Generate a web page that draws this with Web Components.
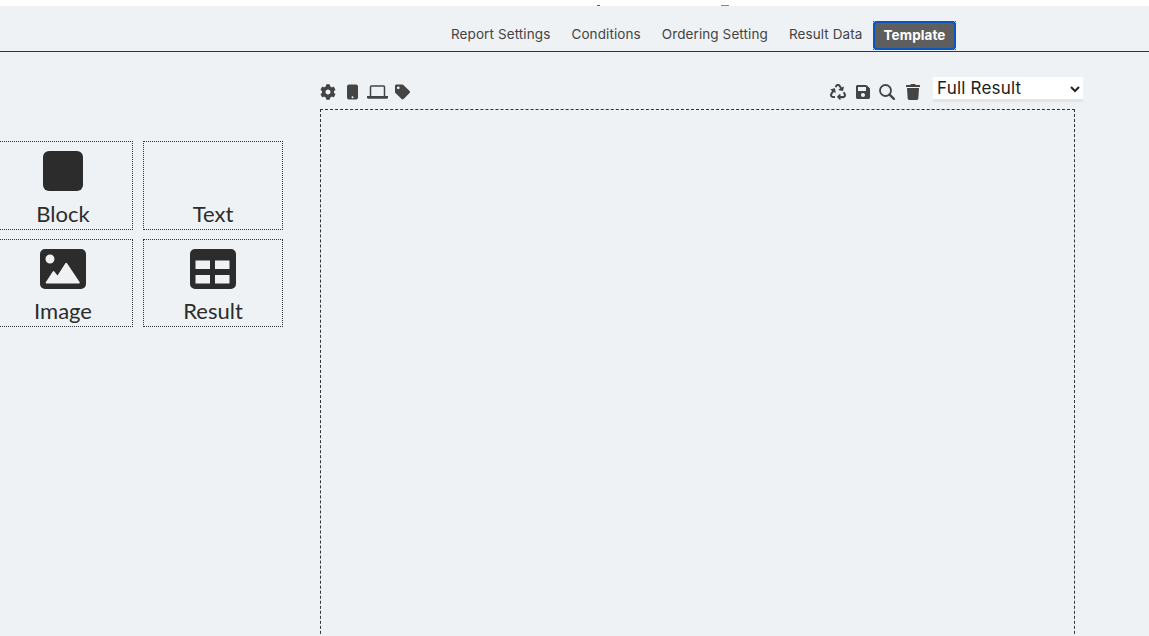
<!DOCTYPE html>
<html>
<head>
<meta charset="utf-8">
<title>Template</title>
<style>
    html, body { margin: 0; height: 100%; overflow: hidden; }
    body { background: #eef2f5; }
</style>
</head>
<body>
<report-designer>
    <top-strip slot="top"></top-strip>
    <tab-bar slot="tabs">
        <tab-link>Report Settings</tab-link>
        <tab-link>Conditions</tab-link>
        <tab-link>Ordering Setting</tab-link>
        <tab-link>Result Data</tab-link>
        <tab-link active>Template</tab-link>
    </tab-bar>
    <widget-palette slot="palette">
        <palette-item label="Block" icon="block" style="--label-gap:10px"></palette-item>
        <palette-item label="Text" style="--label-gap:10px"></palette-item>
        <palette-item label="Image" icon="image"></palette-item>
        <palette-item label="Result" icon="table"></palette-item>
    </widget-palette>
    <design-canvas slot="canvas"></design-canvas>
</report-designer>

<script>
const ICONS = {
    block: '<svg width="40" height="40" viewBox="0 0 40 40"><rect width="40" height="40" rx="6" fill="#2c2c2c"/></svg>',
    image: '<svg width="46" height="40" viewBox="0 0 46 40"><path fill="#2c2c2c" fill-rule="evenodd" d="M5 0h36a5 5 0 0 1 5 5v30a5 5 0 0 1-5 5H5a5 5 0 0 1-5-5V5a5 5 0 0 1 5-5zM10 5.500a4.500 4.500 0 1 0 0 9 4.500 4.500 0 0 0 0-9zM6.500 34.500h32.500a.8.8 0 0 0 .7-1.200L27.200 14.500a1.200 1.200 0 0 0-2 0L17.500 26.500l-3-3.800a1.200 1.200 0 0 0-1.900 0L5.800 33.300a.8.8 0 0 0 .7 1.200z"/></svg>',
    table: '<svg width="46" height="40" viewBox="0 0 46 40"><path fill="#2c2c2c" fill-rule="evenodd" d="M5 0h36a5 5 0 0 1 5 5v30a5 5 0 0 1-5 5H5a5 5 0 0 1-5-5V5a5 5 0 0 1 5-5zM5.500 11.500v8.500h14.500v-8.500zM25 11.500v8.500h14.500v-8.500zM5.500 26v8.500h14.500V26zM25 26v8.500h14.500V26z"/></svg>'
};

const TOOLS = {
    gear: ['0 0 512 512', '<path d="M487.400 315.700l-42.600-24.600c4.300-23.200 4.300-47 0-70.200l42.600-24.600c4.900-2.800 7.100-8.600 5.500-14-11.100-35.600-30-67.800-54.700-94.600-3.800-4.100-10-5.100-14.800-2.300L380.800 110c-17.900-15.400-38.500-27.300-60.800-35.100V25.800c0-5.600-3.900-10.500-9.400-11.700-36.700-8.200-74.300-7.800-109.200 0-5.500 1.200-9.400 6.100-9.400 11.700V75c-22.200 7.900-42.800 19.800-60.800 35.100L88.700 85.500c-4.900-2.800-11-1.900-14.800 2.300-24.700 26.700-43.600 58.900-54.700 94.600-1.700 5.400.6 11.200 5.500 14L67.300 221c-4.300 23.200-4.300 47 0 70.200l-42.600 24.600c-4.900 2.800-7.100 8.600-5.500 14 11.100 35.600 30 67.800 54.700 94.600 3.800 4.100 10 5.100 14.800 2.300l42.600-24.600c17.900 15.400 38.500 27.300 60.800 35.100v49.200c0 5.600 3.900 10.500 9.400 11.700 36.700 8.200 74.300 7.800 109.200 0 5.500-1.200 9.400-6.100 9.400-11.700v-49.200c22.200-7.900 42.800-19.800 60.800-35.100l42.600 24.600c4.900 2.800 11 1.900 14.800-2.300 24.700-26.700 43.600-58.900 54.700-94.600 1.500-5.500-.7-11.300-5.600-14.100zM256 336c-44.100 0-80-35.900-80-80s35.900-80 80-80 80 35.900 80 80-35.900 80-80 80z"/>'],
    phone: ['0 0 11 16', '<path fill-rule="evenodd" d="M2 .5h7A2 2 0 0 1 11 2.500v11a2 2 0 0 1-2 2H2a2 2 0 0 1-2-2v-11a2 2 0 0 1 2-2zM5.500 12.300a1 1 0 1 0 0 2 1 1 0 0 0 0-2z"/>'],
    laptop: ['0 0 21 16', '<path fill="none" stroke="#444" stroke-width="1.500" d="M3.500 12V3a1 1 0 0 1 1-1h12a1 1 0 0 1 1 1v9"/><path d="M0 12h21v1.300a1.500 1.500 0 0 1-1.500 1.500h-18A1.500 1.500 0 0 1 0 13.300z"/>'],
    tag: ['0 0 512 512', '<path d="M0 252.118V48C0 21.490 21.490 0 48 0h204.118a48 48 0 0 1 33.941 14.059l211.882 211.882c18.745 18.745 18.745 49.137 0 67.882L293.823 497.941c-18.745 18.745-49.137 18.745-67.882 0L14.059 286.059A48 48 0 0 1 0 252.118zM112 64c-26.510 0-48 21.490-48 48s21.490 48 48 48 48-21.490 48-48-21.490-48-48-48z"/>'],
    recycle: ['0 0 512 512', '<path d="M184.561 261.903c3.232 13.997-12.123 24.635-24.068 17.168l-40.736-25.455-50.867 81.402C55.606 356.273 70.960 384 96.012 384H148c6.627 0 12 5.373 12 12v40c0 6.627-5.373 12-12 12H96.115c-75.334 0-121.302-83.048-81.408-146.880l50.822-81.388-40.725-25.448c-12.081-7.547-8.966-25.961 4.879-29.158l110.237-25.450c8.611-1.988 17.201 3.381 19.189 11.990l25.452 110.237zm98.561-182.915l41.289 66.076-40.740 25.457c-12.051 7.528-9 25.953 4.879 29.158l110.237 25.450c8.672 1.999 17.215-3.438 19.189-11.990l25.450-110.237c3.197-13.844-11.990-24.719-24.068-17.168l-40.687 25.424-41.263-66.082c-37.521-60.033-125.209-60.171-162.816 0l-17.963 28.766c-3.510 5.620-1.800 13.021 3.820 16.533l33.919 21.195c5.620 3.512 13.024 1.803 16.536-3.817l17.961-28.743c12.712-20.341 41.973-19.676 54.257-.022zM497.288 301.120l-27.515-44.065c-3.511-5.623-10.916-7.334-16.538-3.821l-33.861 21.159c-5.620 3.512-7.330 10.915-3.822 16.536l27.564 44.112c13.067 20.912-2.050 47.959-26.960 47.959H336v-48.002c0-14.242-17.263-21.315-27.315-11.313l-80 79.981c-6.250 6.250-6.250 16.380 0 22.630l80 80C318.740 522.137 336 515.062 336 500.999V453h79.961c75.257 0 121.335-82.989 81.327-151.880z"/>'],
    save: ['0 0 448 512', '<path d="M433.941 129.941l-83.882-83.882A48 48 0 0 0 316.118 32H48C21.490 32 0 53.490 0 80v352c0 26.510 21.490 48 48 48h352c26.510 0 48-21.490 48-48V163.882a48 48 0 0 0-14.059-33.941zM224 416c-35.346 0-64-28.654-64-64 0-35.346 28.654-64 64-64s64 28.654 64 64c0 35.346-28.654 64-64 64zm96-304.520V212c0 6.627-5.373 12-12 12H76c-6.627 0-12-5.373-12-12V108c0-6.627 5.373-12 12-12h228.520c3.183 0 6.235 1.264 8.485 3.515l3.480 3.480A11.996 11.996 0 0 1 320 111.480z"/>'],
    search: ['0 0 16 16', '<circle cx="6.500" cy="6.500" r="5.500" fill="none" stroke="#444" stroke-width="1.800"/><path d="M10.600 10.600l4.300 4.300" fill="none" stroke="#444" stroke-width="2.300" stroke-linecap="round"/>'],
    trash: ['0 0 448 512', '<path d="M432 32H312l-9.400-18.700A24 24 0 0 0 281.100 0H166.800a23.720 23.720 0 0 0-21.400 13.300L136 32H16A16 16 0 0 0 0 48v32a16 16 0 0 0 16 16h416a16 16 0 0 0 16-16V48a16 16 0 0 0-16-16zM53.200 467a48 48 0 0 0 47.900 45h245.800a48 48 0 0 0 47.900-45L416 128H32z"/>']
};

class ReportDesigner extends HTMLElement {
    connectedCallback() {
        this.attachShadow({ mode: 'open' });
        this.shadowRoot.innerHTML = `
            <style>
                :host { display: block; height: 636px; overflow: hidden; }
                .work { display: flex; align-items: flex-start; }
                .left { width: 283px; margin-top: 89px; flex: none; }
                .right { margin-left: 37px; margin-top: 25px; }
            </style>
            <slot name="top"></slot>
            <slot name="tabs"></slot>
            <div class="work">
                <div class="left"><slot name="palette"></slot></div>
                <div class="right"><slot name="canvas"></slot></div>
            </div>
        `;
    }
}

class TopStrip extends HTMLElement {
    connectedCallback() {
        this.attachShadow({ mode: 'open' });
        this.shadowRoot.innerHTML = `
            <style>
                :host { display: block; height: 6px; background: #fff; position: relative; overflow: hidden; }
                i { position: absolute; top: 5px; height: 1px; }
                .a { left: 597px; width: 3px; background: #666; }
                .b { left: 721px; width: 8px; background: #888; }
            </style>
            <i class="a"></i><i class="b"></i>
        `;
    }
}

class TabBar extends HTMLElement {
    connectedCallback() {
        this.attachShadow({ mode: 'open' });
        this.shadowRoot.innerHTML = `
            <style>
                :host {
                    display: flex;
                    align-items: center;
                    box-sizing: content-box;
                    height: 34px;
                    padding: 11px 0 0 440.5px;
                    border-bottom: 1px solid #333;
                    font: 13.5px "Inter", "Liberation Sans", sans-serif;
                    letter-spacing: .1px;
                }
            </style>
            <slot></slot>
        `;
    }
}

class TabLink extends HTMLElement {
    connectedCallback() {
        this.attachShadow({ mode: 'open' });
        this.shadowRoot.innerHTML = `
            <style>
                :host { display: block; padding: 0 10.5px; color: #444; white-space: nowrap; }
                :host([active]) {
                    box-sizing: border-box;
                    width: 83px;
                    height: 29px;
                    padding: 0;
                    margin: 3px 0 0 0;
                    border: 1px dotted #555;
                }
                .btn { display: contents; }
                :host([active]) .btn {
                    display: block;
                    box-sizing: border-box;
                    height: 29px;
                    margin: -1px;
                    background: #5e5e5e;
                    border: 2px solid #0a55c0;
                    border-radius: 4px;
                    color: #fff;
                    font-weight: 700;
                    line-height: 25px;
                    text-align: center;
                }
            </style>
            <span class="btn"><slot></slot></span>
        `;
    }
}

class WidgetPalette extends HTMLElement {
    connectedCallback() {
        this.attachShadow({ mode: 'open' });
        this.shadowRoot.innerHTML = `
            <style>
                :host {
                    display: grid;
                    grid-template-columns: 140px 140px;
                    grid-template-rows: 89px 88px;
                    column-gap: 10px;
                    row-gap: 9px;
                    margin-left: -7px;
                }
            </style>
            <slot></slot>
        `;
    }
}

class PaletteItem extends HTMLElement {
    connectedCallback() {
        this.attachShadow({ mode: 'open' });
        const icon = ICONS[this.getAttribute('icon')] || '';
        this.shadowRoot.innerHTML = `
            <style>
                :host {
                    display: flex;
                    flex-direction: column;
                    align-items: center;
                    box-sizing: border-box;
                    border: 1px dotted #333;
                    color: #2c2c2c;
                    font: 22px/26px "Lato", "Noto Sans", sans-serif;
                }
                .ic { height: 40px; margin-top: 9px; }
                .lb { margin-top: var(--label-gap, 9px); }
            </style>
            <div class="ic">${icon}</div>
            <div class="lb">${this.getAttribute('label')}</div>
        `;
    }
}

class ToolIcon extends HTMLElement {
    connectedCallback() {
        this.attachShadow({ mode: 'open' });
        const [box, shape] = TOOLS[this.getAttribute('name')];
        const w = this.getAttribute('w') || 16;
        this.shadowRoot.innerHTML = `
            <style>
                :host { display: block; height: 16px; line-height: 0; flex: none; }
            </style>
            <svg width="${w}" height="16" viewBox="${box}" fill="#444">${shape}</svg>
        `;
    }
}

class DesignCanvas extends HTMLElement {
    connectedCallback() {
        this.attachShadow({ mode: 'open' });
        this.shadowRoot.innerHTML = `
            <style>
                :host { display: block; width: 755px; }
                .bar { display: flex; align-items: flex-start; height: 32px; width: 763px; }
                .group { display: flex; margin-top: 7px; }
                .group.r { margin-left: auto; margin-right: 13px; }
                select {
                    box-sizing: border-box;
                    width: 150px;
                    height: 25px;
                    border: 0;
                    border-bottom: 3px solid #e2e4e6;
                    background: #fff;
                    color: #222;
                    font: 17px "Inter", "Liberation Sans", sans-serif;
                    letter-spacing: .2px;
                    padding: 0;
                }
                .paper {
                    box-sizing: border-box;
                    height: 560px;
                    border: 1px dashed #333;
                }
            </style>
            <div class="bar">
                <div class="group">
                    <tool-icon name="gear"></tool-icon>
                    <tool-icon name="phone" w="11" style="margin-left:11px"></tool-icon>
                    <tool-icon name="laptop" w="21" style="margin-left:9px"></tool-icon>
                    <tool-icon name="tag" w="15" style="margin-left:7px"></tool-icon>
                </div>
                <div class="group r">
                    <tool-icon name="recycle"></tool-icon>
                    <tool-icon name="save" w="14" style="margin-left:10px"></tool-icon>
                    <tool-icon name="search" style="margin-left:9px"></tool-icon>
                    <tool-icon name="trash" w="14" style="margin-left:11px"></tool-icon>
                </div>
                <select><option>Full Result</option></select>
            </div>
            <div class="paper"></div>
        `;
    }
}

customElements.define('report-designer', ReportDesigner);
customElements.define('top-strip', TopStrip);
customElements.define('tab-bar', TabBar);
customElements.define('tab-link', TabLink);
customElements.define('widget-palette', WidgetPalette);
customElements.define('palette-item', PaletteItem);
customElements.define('tool-icon', ToolIcon);
customElements.define('design-canvas', DesignCanvas);
</script>
</body>
</html>
